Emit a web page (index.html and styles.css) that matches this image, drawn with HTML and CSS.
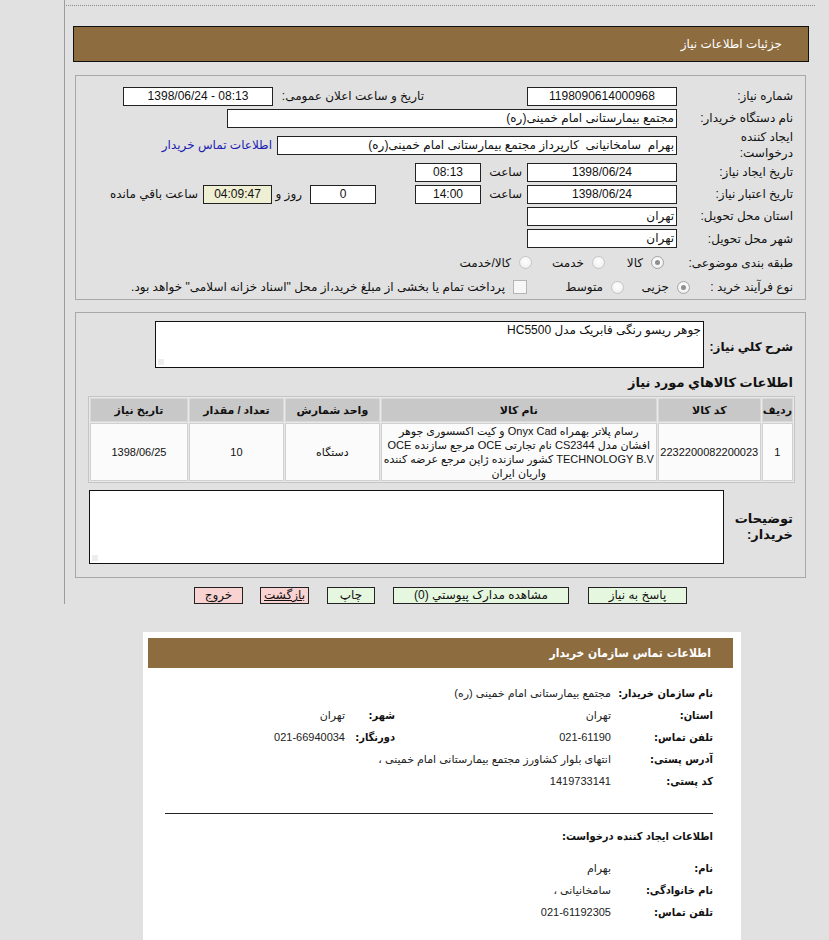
FILE: index.html
```html
<!DOCTYPE html>
<html lang="fa">
<head>
<meta charset="utf-8">
<title>جزئیات اطلاعات نیاز</title>
<link rel="stylesheet" href="styles.css">
</head>
<body>
<div class="main">
  <div class="dots"></div>
  <div class="hdr">جزئیات اطلاعات نیاز</div>

  <div class="box box1">
    <div class="row">
      <div class="lbl">شماره نیاز:</div>
      <div class="inp w150 c">1198090614000968</div>
      <div class="lbl2">تاریخ و ساعت اعلان عمومی:</div>
      <div class="inp w150 c ltr">1398/06/24 - 08:13</div>
    </div>
    <div class="row">
      <div class="lbl">نام دستگاه خریدار:</div>
      <div class="inp w450">مجتمع بیمارستانی امام خمینی(ره)</div>
    </div>
    <div class="row tall">
      <div class="lbl two">ایجاد کننده<br>درخواست:</div>
      <div class="inp w400 pre">بهرام  سامخانیانی  کارپرداز مجتمع بیمارستانی امام خمینی(ره)</div>
      <a class="link">اطلاعات تماس خریدار</a>
    </div>
    <div class="row">
      <div class="lbl">تاریخ ایجاد نیاز:</div>
      <div class="inp w150 c">1398/06/24</div>
      <div class="saat">ساعت</div>
      <div class="inp w66 c">08:13</div>
    </div>
    <div class="row">
      <div class="lbl">تاریخ اعتبار نیاز:</div>
      <div class="inp w150 c">1398/06/24</div>
      <div class="saat">ساعت</div>
      <div class="inp w66 c">14:00</div>
      <div class="inp w66 c days">0</div>
      <div class="roz">روز و</div>
      <div class="inp w69 c remain">04:09:47</div>
      <div class="rem-lbl">ساعت باقي مانده</div>
    </div>
    <div class="row">
      <div class="lbl">استان محل تحویل:</div>
      <div class="inp w150">تهران</div>
    </div>
    <div class="row r7">
      <div class="lbl">شهر محل تحویل:</div>
      <div class="inp w150">تهران</div>
    </div>
    <div class="row r8">
      <div class="lbl">طبقه بندی موضوعی:</div>
      <div class="opt o1"><span class="radio on"></span><span class="otx">کالا</span></div>
      <div class="opt o2"><span class="radio"></span><span class="otx">خدمت</span></div>
      <div class="opt o3"><span class="radio"></span><span class="otx">کالا/خدمت</span></div>
    </div>
    <div class="row r9">
      <div class="lbl short">نوع فرآیند خرید :</div>
      <div class="opt p1"><span class="radio on"></span><span class="otx">جزیی</span></div>
      <div class="opt p2"><span class="radio"></span><span class="otx">متوسط</span></div>
      <div class="opt p3"><span class="check"></span><span class="otx">پرداخت تمام یا بخشی از مبلغ خرید،از محل "اسناد خزانه اسلامی" خواهد بود.</span></div>
    </div>
  </div>

  <div class="box box2">
    <div class="row2">
      <div class="blbl w89">شرح کلي نیاز:</div>
      <div class="area a1">جوهر ریسو رنگی فابریک مدل HC5500<span class="grip"></span></div>
    </div>
    <div class="sub">اطلاعات کالاهاي مورد نیاز</div>
    <div class="tblwrap">
      <table class="tbl">
        <thead>
          <tr>
            <th class="k1">ردیف</th>
            <th class="k2">کد کالا</th>
            <th class="k3">نام کالا</th>
            <th class="k4">واحد شمارش</th>
            <th class="k5">تعداد / مقدار</th>
            <th class="k6">تاریخ نیاز</th>
          </tr>
        </thead>
        <tbody>
          <tr>
            <td>1</td>
            <td>2232200082200023</td>
            <td class="name">رسام پلاتر بهمراه Onyx Cad و کیت اکسسوری جوهر<br>افشان مدل CS2344 نام تجارتی OCE مرجع سازنده OCE<br>TECHNOLOGY B.V کشور سازنده ژاپن مرجع عرضه کننده<br>واریان ایران</td>
            <td>دستگاه</td>
            <td>10</td>
            <td>1398/06/25</td>
          </tr>
        </tbody>
      </table>
    </div>
    <div class="row2 r-desc">
      <div class="blbl w69">توضیحات<br>خریدار:</div>
      <div class="area a2"><span class="grip"></span></div>
    </div>
  </div>

  <div class="btns">
    <div class="btn g b1">پاسخ به نیاز</div>
    <div class="btn g b2">مشاهده مدارک پیوستي (0)</div>
    <div class="btn g b3">چاپ</div>
    <div class="btn p b4"><u>بازگشت</u></div>
    <div class="btn p b5">خروج</div>
  </div>
</div>

<div class="contact">
  <div class="cbar">اطلاعات تماس سازمان خریدار</div>
  <div class="crow first">
    <div class="cl">نام سازمان خریدار:</div>
    <div class="cv">مجتمع بیمارستانی امام خمینی (ره)</div>
  </div>
  <div class="crow">
    <div class="cl">استان:</div>
    <div class="cv">تهران</div>
    <div class="cl2">شهر:</div>
    <div class="cv2">تهران</div>
  </div>
  <div class="crow">
    <div class="cl">تلفن تماس:</div>
    <div class="cv">021-61190</div>
    <div class="cl2">دورنگار:</div>
    <div class="cv2">021-66940034</div>
  </div>
  <div class="crow">
    <div class="cl">آدرس پستی:</div>
    <div class="cv wide">انتهای بلوار کشاورز مجتمع بیمارستانی امام خمینی ،</div>
  </div>
  <div class="crow">
    <div class="cl">کد پستی:</div>
    <div class="cv">1419733141</div>
  </div>
  <div class="chr"></div>
  <div class="csub">اطلاعات ایجاد کننده درخواست:</div>
  <div class="crow first2">
    <div class="cl">نام:</div>
    <div class="cv">بهرام</div>
  </div>
  <div class="crow">
    <div class="cl">نام خانوادگی:</div>
    <div class="cv">سامخانیانی ،</div>
  </div>
  <div class="crow">
    <div class="cl">تلفن تماس:</div>
    <div class="cv">021-61192305</div>
  </div>
</div>
</body>
</html>
```

FILE: styles.css
```css
html, body {
  margin: 0;
  padding: 0;
}
body {
  background: #e1e1e1;
  font-family: "Liberation Sans", "DejaVu Sans", sans-serif;
  font-size: 12px;
  color: #111;
}
.main {
  margin-left: 64px;
  width: 764px;
  border-left: 1px solid #9c9c9c;
  padding-top: 5px;
}
.dots {
  margin-left: 1px;
  width: 749px;
  border-top: 1px dotted #8a8a8a;
}
.hdr {
  box-sizing: border-box;
  margin: 20px 0 0 8px;
  width: 736px;
  height: 36px;
  border: 1px solid #111;
  background: #8d6c40;
  color: #fff;
  direction: rtl;
  padding-right: 26px;
  line-height: 34px;
  font-size: 12px;
}
.box {
  box-sizing: border-box;
  margin-left: 10px;
  width: 731px;
  border: 1px solid #a8a8a8;
  direction: rtl;
}
.box1 {
  margin-top: 13px;
  padding: 9px 12px 0 0;
  height: 225px;
}
.row {
  display: flex;
  align-items: center;
  height: 22px;
}
.row.tall { height: 32px; }
.row.r7 { height: 23px; }
.row.r8 { height: 25px; }
.row.r9 { height: 24px; }
.lbl {
  flex: none;
  width: 116px;
  text-align: right;
  white-space: nowrap;
}
.lbl.two { line-height: 16px; }
.lbl.short { width: 103px; }
.lbl2 {
  flex: none;
  width: 151px;
  margin-right: 103px;
  text-align: right;
  white-space: nowrap;
}
.inp {
  flex: none;
  box-sizing: border-box;
  height: 19px;
  line-height: 17px;
  border: 1px solid #222;
  background: #fff;
  padding: 0 2px;
  white-space: nowrap;
  overflow: hidden;
  text-align: right;
}
.inp.c { text-align: center; }
.inp.ltr { direction: ltr; }
.inp.pre { white-space: pre; }
.w150 { width: 150px; }
.w450 { width: 450px; }
.w400 { width: 400px; }
.w66 { width: 66px; }
.w69 { width: 69px; }
.link {
  margin-right: 5px;
  color: #1c1cb0;
  white-space: nowrap;
}
.saat {
  flex: none;
  width: 46px;
  box-sizing: border-box;
  padding-right: 5px;
  text-align: right;
}
.days { margin-right: 39px; }
.roz {
  flex: none;
  width: 38px;
  box-sizing: border-box;
  padding-right: 8px;
  text-align: right;
  white-space: nowrap;
}
.remain { background: #efefd3; }
.rem-lbl {
  margin-right: 5px;
  white-space: nowrap;
}
.opt {
  flex: none;
  display: flex;
  align-items: center;
  white-space: nowrap;
}
.o1 { margin-right: 13px; width: 59px; }
.o2 { width: 73px; }
.o3 { width: 80px; }
.p1 { width: 66px; }
.p2 { width: 97px; }
.otx { margin-right: 8px; }
.radio {
  flex: none;
  box-sizing: border-box;
  width: 13px;
  height: 13px;
  border-radius: 50%;
  border: 1px solid #c6c6c6;
  background: radial-gradient(circle at 50% 40%, #ffffff 0%, #f3f3f3 60%, #e2e2e2 100%);
  position: relative;
}
.radio.on {
  border-color: #a6a6a6;
}
.radio.on::after {
  content: "";
  position: absolute;
  left: 3px;
  top: 3px;
  width: 5px;
  height: 5px;
  border-radius: 50%;
  background: #8e8e8e;
}
.check {
  flex: none;
  box-sizing: border-box;
  width: 14px;
  height: 14px;
  border: 1px solid #b4b4b4;
  background: #f7f7f7;
}
.box2 {
  margin-top: 12px;
  padding: 8px 12px 13px 0;
}
.row2 {
  display: flex;
  align-items: center;
}
.blbl {
  flex: none;
  text-align: right;
  font-weight: bold;
  font-size: 13px;
  line-height: 16px;
  white-space: nowrap;
}
.blbl.w89 { width: 89px; font-size: 12px; padding-top: 4px; }
.blbl.w69 { width: 69px; }
.area {
  box-sizing: border-box;
  border: 1px solid #111;
  background: #fff;
  position: relative;
  padding: 1px 2px;
  font-size: 12px;
}
.a1 { width: 549px; height: 47px; }
.a2 { width: 635px; height: 74px; }
.grip {
  position: absolute;
  left: 2px;
  bottom: 2px;
  width: 6px;
  height: 6px;
  background-image: radial-gradient(circle, #c4c4c4 0.5px, transparent 0.8px);
  background-size: 2px 2px;
}
.sub {
  margin-top: 6px;
  height: 18px;
  line-height: 18px;
  font-weight: bold;
  font-size: 13px;
}
.tblwrap {
  margin-top: 4px;
  margin-right: -2px;
  margin-left: 10px;
}
.tbl {
  width: 707px;
  border-collapse: separate;
  border-spacing: 1px;
  border: 1px solid #c4c4c4;
  background: #e9e9e9;
  font-size: 11px;
}
.tbl th {
  height: 22px;
  background: #c8c8c8;
  font-weight: bold;
  border: 1px solid #d8d8d8;
  padding: 0;
  white-space: nowrap;
}
.tbl td {
  height: 53px;
  background: #fbfbfb;
  border: 1px solid #d0d0d0;
  text-align: center;
  padding: 0;
  white-space: nowrap;
}
.tbl td.name { line-height: 14px; }
.k1 { width: 28px; }
.k2 { width: 101px; }
.k3 { width: 274px; }
.k4 { width: 93px; }
.k5 { width: 93px; }
.k6 { width: 96px; }
.r-desc { margin-top: 7px; }
.btns {
  box-sizing: border-box;
  margin: 9px 0 0 10px;
  width: 731px;
  padding: 0 119px 0 0;
  display: flex;
  direction: rtl;
  height: 17px;
  margin-bottom: 28px;
}
.btn {
  box-sizing: border-box;
  height: 17px;
  line-height: 15px;
  border: 1px solid #222;
  text-align: center;
  font-size: 12px;
  white-space: nowrap;
}
.btn.g { background: #e6f7e0; }
.btn.p { background: #f9d2d2; }
.b1 { width: 99px; }
.b2 { width: 176px; margin-right: 19px; }
.b3 { width: 48px; margin-right: 18px; }
.b4 { width: 49px; margin-right: 18px; }
.b5 { width: 49px; margin-right: 17px; }
.contact {
  box-sizing: border-box;
  margin-left: 143px;
  width: 598px;
  background: #fff;
  direction: rtl;
  padding: 6px 8px 22px 5px;
}
.cbar {
  height: 30px;
  line-height: 30px;
  background: #8d6c40;
  color: #fff;
  font-weight: bold;
  font-size: 12px;
  padding-right: 22px;
  font-family: "DejaVu Sans Condensed", "DejaVu Sans", sans-serif;
}
.crow {
  display: flex;
  align-items: center;
  height: 22px;
  padding-right: 20px;
}
.crow.first { margin-top: 14px; }
.crow.first2 { margin-top: 9px; }
.cl {
  flex: none;
  width: 102px;
  font-weight: bold;
  font-size: 11px;
  white-space: nowrap;
  font-family: "DejaVu Sans Condensed", "DejaVu Sans", sans-serif;
}
.cv {
  flex: none;
  width: 216px;
  font-size: 11px;
  color: #222;
  white-space: nowrap;
}
.cv.wide { width: auto; }
.cl2 {
  flex: none;
  width: 50px;
  font-weight: bold;
  font-size: 11px;
  white-space: nowrap;
  font-family: "DejaVu Sans Condensed", "DejaVu Sans", sans-serif;
}
.cv2 {
  font-size: 11px;
  color: #222;
  white-space: nowrap;
}
.chr {
  margin: 21px 20px 0 0;
  width: 548px;
  border-top: 1px solid #222;
}
.csub {
  margin-top: 12px;
  height: 22px;
  line-height: 22px;
  padding-right: 20px;
  font-weight: bold;
  font-size: 11px;
  font-family: "DejaVu Sans Condensed", "DejaVu Sans", sans-serif;
}
```
